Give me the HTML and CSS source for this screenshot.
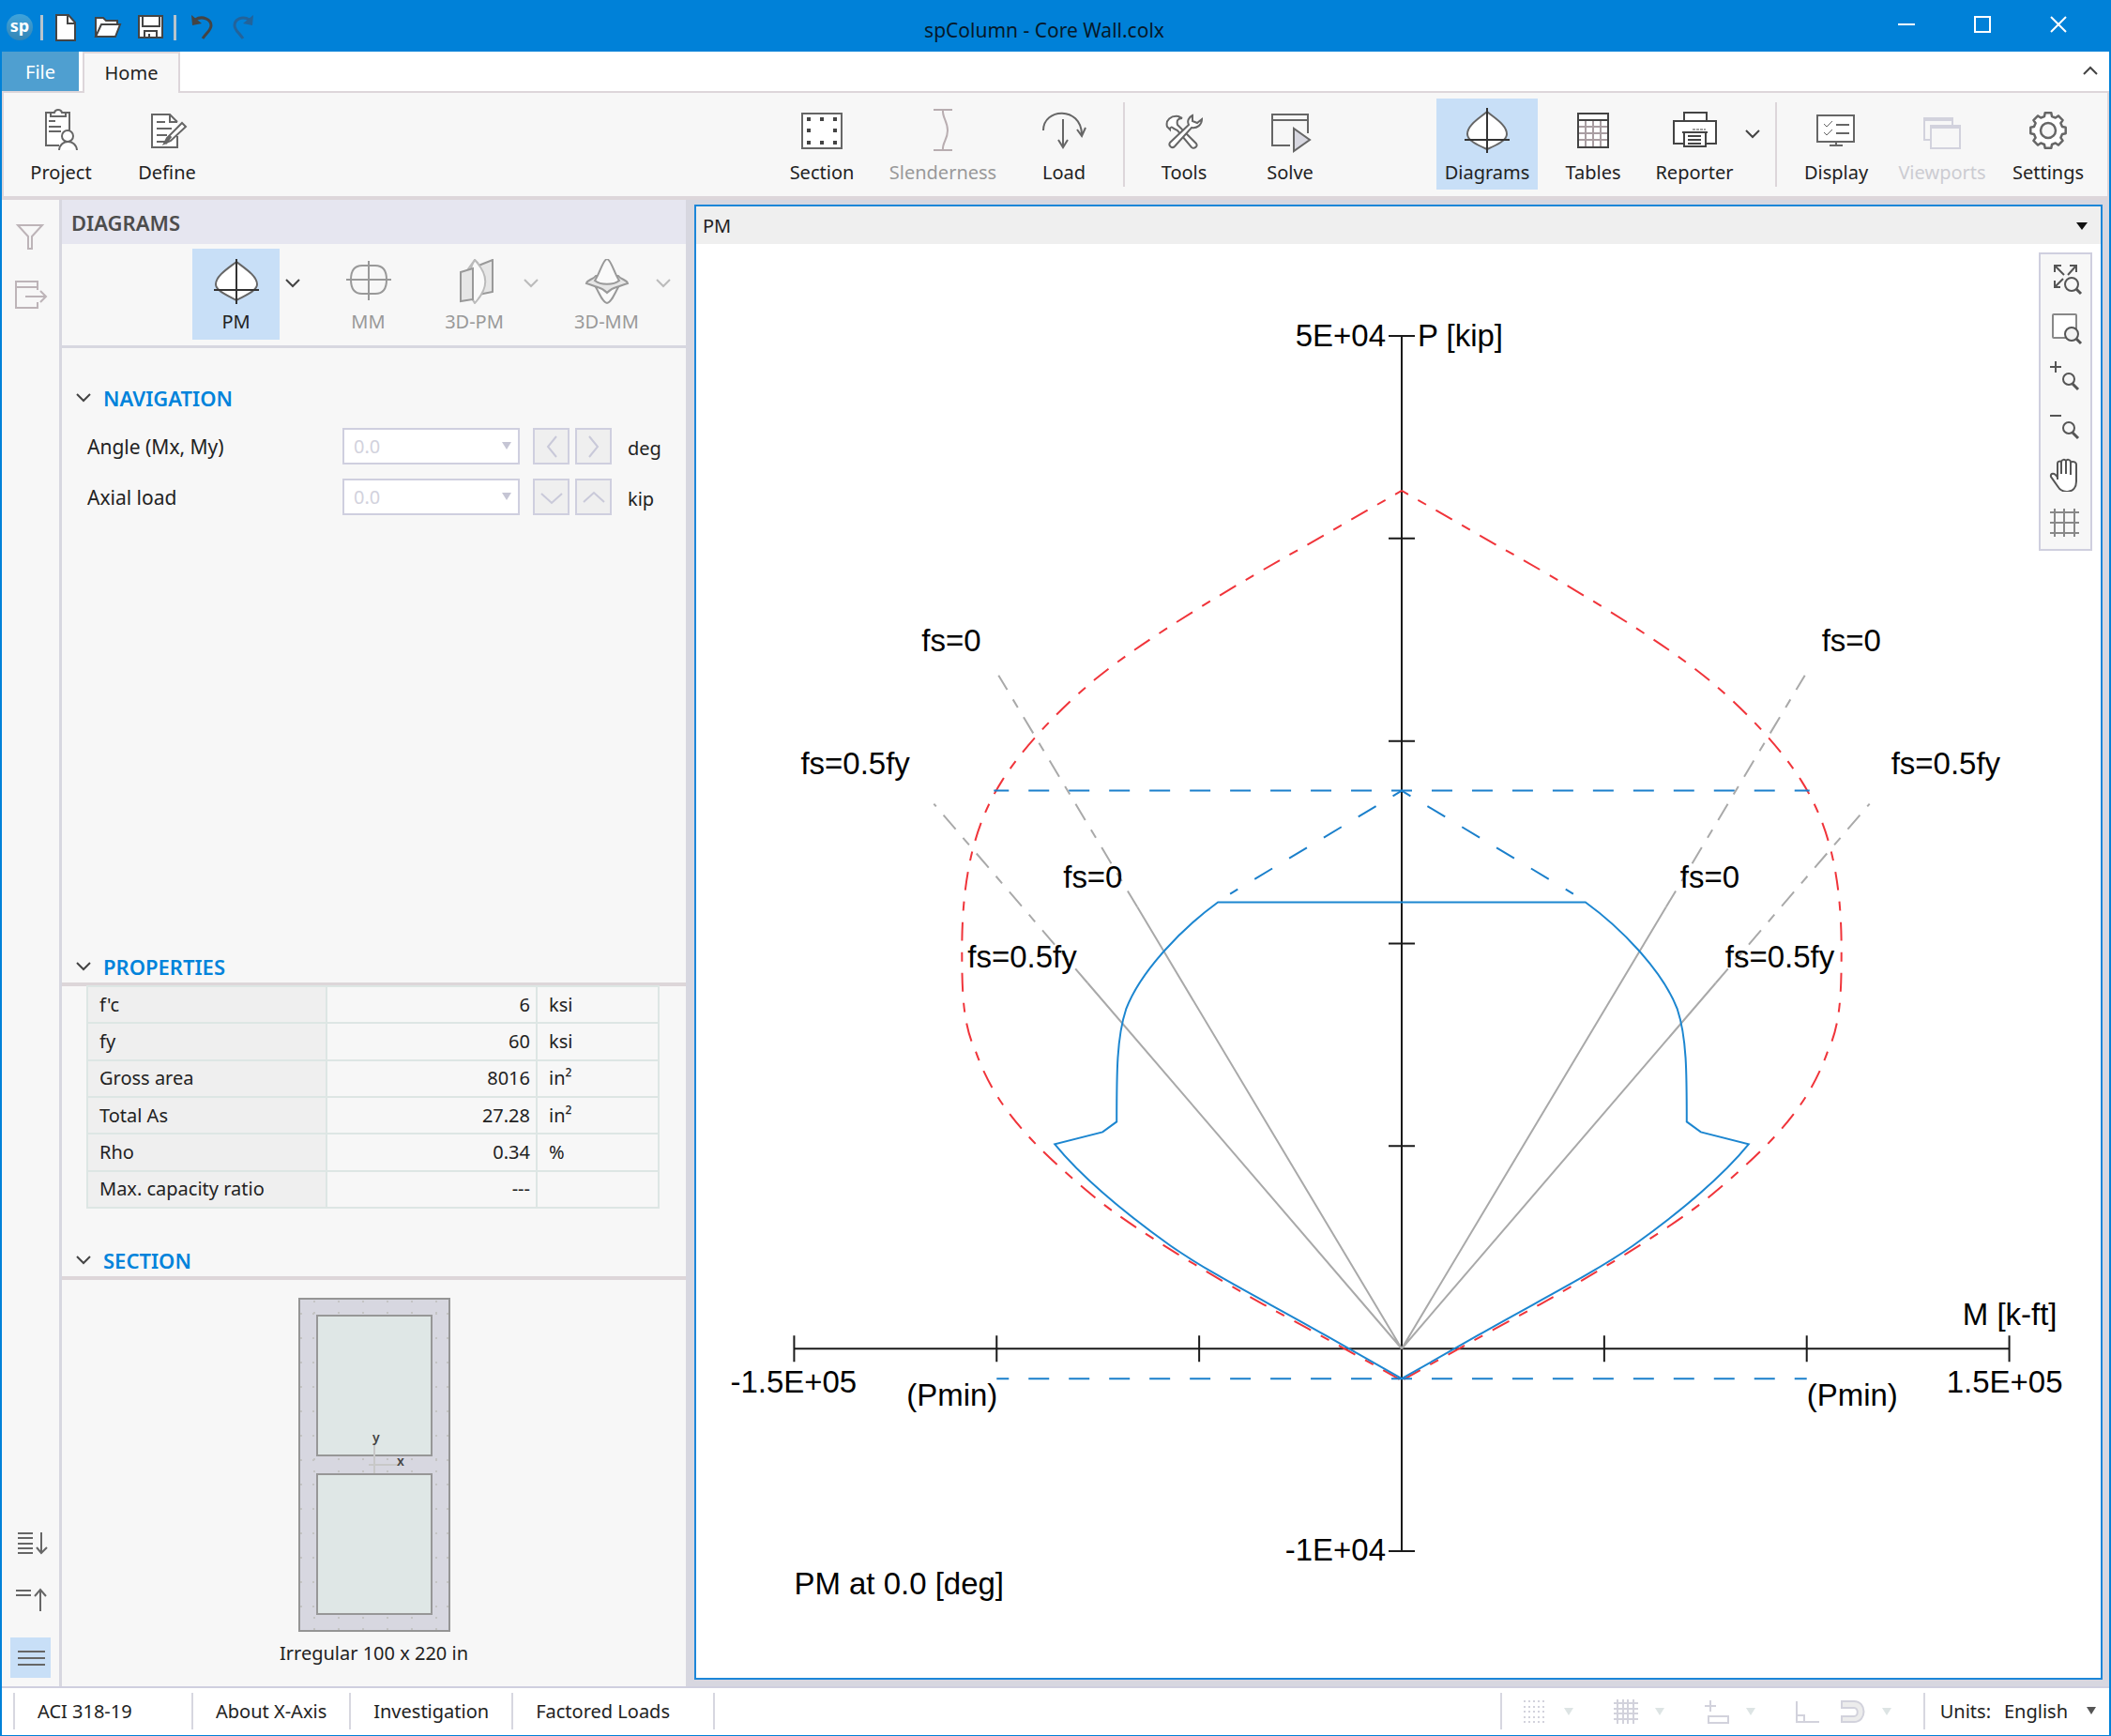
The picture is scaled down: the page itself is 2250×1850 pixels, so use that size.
FILE: index.html
```html
<!DOCTYPE html>
<html lang="en">
<head>
  <meta charset="UTF-8">
  <title>spColumn - Core Wall.colx</title>
  <link rel="stylesheet" href="styles.css">
</head>
<body>

  <header class="titlebar">
    <div class="quick">
      <svg class="logo" viewBox="0 0 28 28"><defs><linearGradient id="lg" x1="0" y1="0" x2="0" y2="1"><stop offset="0" stop-color="#3fa4dc"/><stop offset="1" stop-color="#3585b4"/></linearGradient></defs><circle cx="14" cy="14" r="14" fill="url(#lg)"/><text x="14" y="19" text-anchor="middle">sp</text></svg>
      <span class="quick-sep"></span>
      <button aria-label="New"><svg viewBox="0 0 32 32"><path d="M5 3h13l7 8v19H5z" fill="#fff" stroke="#444" stroke-width="2"/><path d="M17 3v9h8" fill="none" stroke="#444" stroke-width="2"/></svg></button>
      <button aria-label="Open"><svg viewBox="0 0 32 32"><path d="M2 26V6h8l3 3h12v5" fill="#fff" stroke="#444" stroke-width="2"/><path d="M2 26l6-13h20l-5 13z" fill="#fff" stroke="#444" stroke-width="2"/></svg></button>
      <button aria-label="Save"><svg viewBox="0 0 32 32"><path d="M3 4h25v23H3z" fill="#fff" stroke="#444" stroke-width="2"/><path d="M7 4v11h18V4M9 27v-7h13v7M14 27v-4" fill="none" stroke="#444" stroke-width="2"/></svg></button>
      <span class="quick-sep"></span>
      <button aria-label="Undo"><svg viewBox="0 0 32 32"><path d="M11 8c8-5 17 0 17 6 0 5-4 7-9 14" fill="none" stroke="#444" stroke-width="3"/><path d="M7 3l1 11 10-2z" fill="#444"/></svg></button>
      <button aria-label="Redo"><svg viewBox="0 0 32 32"><path d="M24 8C16 3 8 8 8 14c0 5 4 7 9 14" fill="none" stroke="#23639a" stroke-width="3"/><path d="M28 3l-1 11-10-2z" fill="#23639a"/></svg></button>
    </div>
    <div class="title">spColumn - Core Wall.colx</div>
    <div class="window-controls">
      <button aria-label="Minimize"><svg viewBox="0 0 20 20"><path d="M1 10h18"/></svg></button>
      <button aria-label="Maximize"><svg viewBox="0 0 20 20"><path d="M2 2h16v16H2z"/></svg></button>
      <button aria-label="Close"><svg viewBox="0 0 20 20"><path d="M2 2l16 16M18 2L2 18"/></svg></button>
    </div>
  </header>

  <nav class="tabs">
    <button class="tab-file">File</button>
    <button class="tab-home">Home</button>
    <button class="collapse" aria-label="Collapse ribbon"><svg class="chev" viewBox="0 0 16 10"><path d="M1 9l7-7 7 7"/></svg></button>
  </nav>

  <div class="ribbon">
    <div class="group">
      <button class="tool"><svg viewBox="0 0 48 48"><path d="M33 26V5H8v35h14" fill="#fff"/><path d="M13 9V5h4c1-4 7-4 8 0h4v4z" fill="#fff"/><path d="M11 14h7M11 20h13M11 25h13" /><circle cx="31" cy="30" r="6" fill="#fff"/><path d="M22 45c1-12 18-12 19 0" fill="#fff"/></svg>Project</button>
      <button class="tool"><svg viewBox="0 0 48 48"><path d="M35 30v12H8V7h19l8 8" fill="#fff"/><path d="M27 7v8h8M13 15h9M13 22h16M13 29h11M13 36h12"/><path d="M40 16l4 4-16 15-7 3 3-6z" fill="#fff"/><path d="M28 30l-6 8" stroke-width="3"/></svg>Define</button>
    </div>

    <div class="group group-mid">
      <button class="tool"><svg viewBox="0 0 48 48"><path d="M3 6h42v37H3z" fill="#fff"/><path d="M8 12h4m10 0h4m10 0h4M8 24h4m24 0h4M8 37h4m10 0h4m10 0h4" stroke="#444" stroke-width="4"/></svg>Section</button>
      <button class="tool broad off"><svg viewBox="0 0 48 48"><path d="M14 2h20M14 45h20M24 2c-1 8 5 12 5 22s-6 13-5 21" stroke="#b8adb0"/></svg>Slenderness</button>
      <button class="tool"><svg viewBox="0 0 48 48"><path d="M2 24C2 0 42-2 43 28M23 12v29M18 34l5 8 5-8M38 23l5 7 4-9"/></svg>Load</button>
      <span class="sep"></span>
      <button class="tool"><svg viewBox="0 0 48 48"><path d="M6 20c-2-7 4-12 12-11l4 2c-5 0-6 3-5 7l3 3 17 17c2 3-2 6-5 4L17 24l-4-2c-2-2-4-2-4 1z" fill="#fff"/><path d="M33 8c-4 2-6 6-4 10L9 37c-2 3 2 7 5 4l18-20c6 1 11-3 11-9l-5 4-5-2z" fill="#fff"/></svg>Tools</button>
      <button class="tool"><svg viewBox="0 0 48 48"><path d="M24 40H5V7h38v20M5 13h38" /><path d="M28 22v24l17-12z" fill="#d7d7e0"/></svg>Solve</button>
    </div>

    <div class="group group-end">
      <button class="tool active"><svg viewBox="0 0 48 48"><path d="M24 4C16 11 3 18 3 28c0 7 12 12 21 16 9-4 21-9 21-16C45 18 32 11 24 4z" fill="#fff"/><path d="M24 0v48M0 34h48" stroke="#333"/></svg>Diagrams</button>
      <button class="tool"><svg viewBox="0 0 48 48"><path d="M8 6h32v36H8z" fill="#fff"/><path d="M9 20h30M9 27h30M9 34h30M16 14v28M24 14v28M32 14v28" stroke="#a99ea2"/><path d="M8 6h32v36H8zM8 13h32" stroke="#444"/></svg>Tables</button>
      <button class="tool narrow"><svg viewBox="0 0 48 48"><g stroke="#444"><path d="M13 14V5h24v9" fill="#fff"/><path d="M12 38H2V14h45v24H36" fill="#fff"/><path d="M11 26h27"/><path d="M13 26v15h23V26z" fill="#fff"/><path d="M17 30h14M17 34h14M17 38h14"/><path d="M22 23h14" stroke-width="1" stroke-dasharray="3 1"/></g></svg>Reporter</button>
      <button class="drop" aria-label="Reporter options"><svg class="chev" viewBox="0 0 16 10"><path d="M1 1l7 7 7-7"/></svg></button>
      <span class="sep"></span>
      <button class="tool"><svg viewBox="0 0 48 48"><path d="M4 8h39v28H4zM24 36v4M17 40h14" fill="#fff"/><path d="M24 18h14M24 27h14"/><path d="M11 17l3 3 6-6M11 26l3 3 6-6" stroke-width="1"/></svg>Display</button>
      <button class="tool faint"><svg viewBox="0 0 48 48"><path d="M12 34H5V11h30v8M5 13h30M12 19h31v24H12zM12 21h31" stroke="#d2d2dd"/></svg>Viewports</button>
      <button class="tool"><svg viewBox="0 0 48 48"><path d="M20.7 5.3L27.3 5.3 28 9 31.8 10.6 34.9 8.4 39.6 13.1 37.4 16.2 39 20 42.7 20.7 42.7 27.3 39 28 37.4 31.8 39.6 34.9 34.9 39.6 31.8 37.4 28 39 27.3 42.7 20.7 42.7 20 39 16.2 37.4 13.1 39.6 8.4 34.9 10.6 31.8 9 28 5.3 27.3 5.3 20.7 9 20 10.6 16.2 8.4 13.1 13.1 8.4 16.2 10.6 20 9Z" fill="#fff" stroke-width="2.5" stroke-linejoin="round"/><circle cx="24" cy="24" r="8" fill="#f7f7f7" stroke-width="2.5"/></svg>Settings</button>
    </div>
  </div>

  <main class="main">
    <aside class="strip">
      <button aria-label="Filter"><svg viewBox="0 0 36 36"><path d="M4 5h26L19 17v13h-4V17z" stroke="#bdb4b8"/></svg></button>
      <button aria-label="Export"><svg viewBox="0 0 36 36"><path d="M25 13V4H2v28h23v-6M2 10h23M12 20h22M28 14l6 6-6 6" stroke="#bdb4b8"/></svg></button>
      <span class="spacer"></span>
      <button aria-label="Expand all"><svg viewBox="0 0 36 36"><path d="M4 7h16M4 12h16M4 18h16M4 23h16M4 28h16M29 6v22M24 22l5 6 6-6"/></svg></button>
      <button aria-label="Collapse all"><svg viewBox="0 0 36 36"><path d="M2 7h16M2 12h16M28 29V7M22 13l6-7 6 7"/></svg></button>
      <button class="active" aria-label="Menu"><svg viewBox="0 0 36 36"><path d="M4 11h29M4 18h29M4 25h29"/></svg></button>
    </aside>

    <section class="panel">
      <h2>DIAGRAMS</h2>
      <div class="panel-tools">
        <button class="ptool active"><svg viewBox="0 0 48 48"><path d="M24 3C15 10 2 18 2 27c0 7 13 12 22 17 9-5 22-10 22-17C46 18 33 10 24 3z" fill="#fff" stroke="#666"/><path d="M24 0v48M0 33h48" stroke="#333"/></svg>PM</button>
        <button class="drop" aria-label="PM options"><svg class="chev" viewBox="0 0 16 10"><path d="M1 1l7 7 7-7"/></svg></button>
        <button class="ptool off"><svg viewBox="0 0 48 48"><path d="M5 22c0-8 3-15 12-15h14c9 0 12 7 12 15s-3 15-12 15H17C8 37 5 30 5 22zM24 2v42M0 22h48"/></svg>MM</button>
        <button class="ptool off"><svg viewBox="0 0 48 48"><path d="M24 46l-8-9V12l8-11 4 4" stroke="#bbb"/><path d="M28 7l15-6v34l-15 3z" fill="#e6e6e6"/><path d="M24 1c15 16 15 30 0 46-8-12-8-34 0-46z" fill="#fafafa" stroke="#bbb"/><path d="M9 14l13-4v33L9 45z" fill="#e6e6e6"/></svg>3D-PM</button>
        <button class="drop" aria-label="3D-PM options"><svg class="chev off" viewBox="0 0 16 10"><path d="M1 1l7 7 7-7"/></svg></button>
        <button class="ptool off"><svg viewBox="0 0 48 48"><path d="M12 30c4 7 8 17 12 17s8-10 12-17z" fill="#fafafa"/><path d="M12 18c-3 4-9 4-10 8 4 1 8 3 12 4 4 1 7 3 10 6 3-3 6-5 10-6 4-1 8-3 12-4-1-4-7-4-10-8z" fill="#e6e6e6"/><path d="M24 0c4 0 8 16 13 23-6 5-20 5-26 0C16 16 20 0 24 0z" fill="#fafafa"/></svg>3D-MM</button>
        <button class="drop" aria-label="3D-MM options"><svg class="chev off" viewBox="0 0 16 10"><path d="M1 1l7 7 7-7"/></svg></button>
      </div>

      <div class="block block-nav">
        <h3><svg class="chev" viewBox="0 0 16 10"><path d="M1 1l7 7 7-7"/></svg>NAVIGATION</h3>
        <div class="field">
          <label for="angle">Angle (Mx, My)</label>
          <span class="select"><select id="angle" disabled><option>0.0</option></select></span>
          <button class="step" disabled aria-label="Previous angle"><svg viewBox="0 0 26 26"><path d="M18 2L9 13l9 11"/></svg></button>
          <button class="step" disabled aria-label="Next angle"><svg viewBox="0 0 26 26"><path d="M8 2l9 11-9 11"/></svg></button>
          <span class="unit">deg</span>
        </div>
        <div class="field">
          <label for="axial">Axial load</label>
          <span class="select"><select id="axial" disabled><option>0.0</option></select></span>
          <button class="step" disabled aria-label="Lower load"><svg viewBox="0 0 26 26"><path d="M2 9l11 10L24 9"/></svg></button>
          <button class="step" disabled aria-label="Raise load"><svg viewBox="0 0 26 26"><path d="M2 18L13 8l11 10"/></svg></button>
          <span class="unit">kip</span>
        </div>
      </div>

      <div class="block block-props">
        <h3 class="ruled"><svg class="chev" viewBox="0 0 16 10"><path d="M1 1l7 7 7-7"/></svg>PROPERTIES</h3>
        <table>
          <tr><th>f'c</th><td class="num">6</td><td>ksi</td></tr>
          <tr><th>fy</th><td class="num">60</td><td>ksi</td></tr>
          <tr><th>Gross area</th><td class="num">8016</td><td>in²</td></tr>
          <tr><th>Total As</th><td class="num">27.28</td><td>in²</td></tr>
          <tr><th>Rho</th><td class="num">0.34</td><td>%</td></tr>
          <tr><th>Max. capacity ratio</th><td class="num">---</td><td></td></tr>
        </table>
      </div>

      <div class="block">
        <h3 class="ruled"><svg class="chev" viewBox="0 0 16 10"><path d="M1 1l7 7 7-7"/></svg>SECTION</h3>
        <figure>
          <svg class="section-view" viewBox="0 0 162 356">
            <rect x="1" y="1" width="160" height="354" fill="#d7d7e0" stroke="#959595" stroke-width="2"/>
            <!-- rebar along the wall faces -->
            <g fill="none" stroke="#c4c4c4" stroke-width="2" stroke-dasharray="2 24">
              <path d="M3 16v330M16 16v330M147 16v330M159 16v330"/>
              <path d="M16 4h140M16 16h140M16 172h140M16 185h140M16 341h140M16 353h140"/>
            </g>
            <rect x="20" y="19" width="122" height="149" fill="#dfe7e6" stroke="#979797" stroke-width="2"/>
            <rect x="20" y="188" width="122" height="149" fill="#dfe7e6" stroke="#979797" stroke-width="2"/>
            <path d="M81 155v32M75 178h34" stroke="#c8c8c8" stroke-width="2"/>
            <text x="79" y="154">y</text>
            <text x="105" y="179">x</text>
          </svg>
          <figcaption>Irregular 100 x 220 in</figcaption>
        </figure>
      </div>
    </section>

    <section class="viewport">
      <div class="viewport-head">PM<button class="tri" aria-label="Viewport menu"></button></div>
      <div class="plot">
        <svg class="chart" viewBox="742 260 1497 1529">
          <g class="axis">
            <path d="M1494 358v1296M846 1438h1296"/>
            <path d="M1480 358h28M1480 574h28M1480 790h28M1480 1006h28M1480 1222h28M1480 1654h28"/>
            <path d="M846 1424v28M1062 1424v28M1278 1424v28M1710 1424v28M1926 1424v28M2142 1424v28"/>
          </g>
          <g id="half">
            <path class="nominal" d="M1494 523L1393 581C1330 616 1220 680 1165 726C1128 757 1090 797 1068 832C1040 876 1025 930 1025 1012C1025 1060 1026 1092 1040 1122C1062 1184 1105 1225 1167 1277C1210 1312 1300 1365 1347 1391C1397 1418 1455 1450 1494 1472"/>
            <path class="limit" d="M1494 843H1059"/>
            <path class="limit" d="M1494 843L1311 953"/>
            <path class="limit" d="M1494 1470H1062"/>
            <path class="ray" d="M1494 1438L1212 967M1494 1438L1159 1048"/>
            <path class="ray dashed" d="M1212 967L1064 720M1159 1048L995 857"/>
            <path class="design" d="M1494 962H1298C1262 988 1216 1034 1200 1076C1190 1106 1190 1144 1190 1196L1175 1207 1124 1220C1155 1258 1208 1300 1247 1328C1290 1358 1350 1388 1413 1424L1494 1470"/>
          </g>
          <use href="#half" transform="translate(2988) scale(-1 1)"/>
          <text x="1477" y="369" class="end">5E+04</text>
          <text x="1511" y="369">P [kip]</text>
          <text x="982" y="694">fs=0</text>
          <text x="1942" y="694">fs=0</text>
          <text x="853" y="825">fs=0.5fy</text>
          <text x="2016" y="825">fs=0.5fy</text>
          <text x="1133" y="946">fs=0</text>
          <text x="1791" y="946">fs=0</text>
          <text x="1031" y="1032">fs=0.5fy</text>
          <text x="1839" y="1032">fs=0.5fy</text>
          <text x="2193" y="1413" class="end">M [k-ft]</text>
          <text x="778" y="1485">-1.5E+05</text>
          <text x="2199" y="1485" class="end">1.5E+05</text>
          <text x="1063" y="1499" class="end">(Pmin)</text>
          <text x="1926" y="1499">(Pmin)</text>
          <text x="1477" y="1664" class="end">-1E+04</text>
          <text x="846" y="1700">PM at 0.0 [deg]</text>
        </svg>
        <div class="zoombar">
          <button aria-label="Zoom extents"><svg viewBox="0 0 36 36"><path d="M16 13L6 3M6 10V3h7M20 13l9-10M22 3h7v7M15 17l-9 9M6 19v7h6"/><circle cx="24" cy="23" r="7"/><path d="M29 28l5 5" stroke-width="3"/></svg></button>
          <button aria-label="Zoom window"><svg viewBox="0 0 36 36"><rect x="4" y="3" width="25" height="25" rx="1" fill="#fff" stroke="#888"/><circle cx="24" cy="24" r="7" fill="#f2f2f2"/><path d="M29 29l5 5" stroke-width="3"/></svg></button>
          <button aria-label="Zoom in"><svg viewBox="0 0 36 36"><path d="M1 7h12M7 1v12"/><circle cx="21" cy="20" r="6"/><path d="M25 25l6 6" stroke-width="3"/></svg></button>
          <button aria-label="Zoom out"><svg viewBox="0 0 36 36"><path d="M1 7h12"/><circle cx="21" cy="20" r="6"/><path d="M25 25l6 6" stroke-width="3"/></svg></button>
          <button aria-label="Pan"><svg viewBox="0 0 36 36"><path d="M9 23V6c0-3 4-3 4-1 0-4 5-4 5-1 0-3 5-3 5 1 1-2 6-1 6 2v18c0 13-15 14-20 5L2 20c-1-4 4-5 7 1" fill="#fff"/><path d="M13 5v12M18 4v13M23 5v13"/></svg></button>
          <button aria-label="Grid"><svg viewBox="0 0 36 36"><path d="M1 6h31M1 17h31M1 28h31M6 2v30M16 2v30M27 2v30" stroke="#888"/></svg></button>
        </div>
      </div>
    </section>
  </main>

  <footer class="status">
    <span class="cell cell-first">ACI 318-19</span>
    <span class="cell">About X-Axis</span>
    <span class="cell">Investigation</span>
    <span class="cell cell-last">Factored Loads</span>
    <div class="status-tools">
      <button aria-label="Snap grid"><svg viewBox="0 0 26 26"><path d="M1 2h24M1 8h24M1 13h24M1 19h24M1 24h24" stroke-dasharray="2 3"/></svg></button>
      <button class="tri pale" aria-label="Snap grid options"></button>
      <button aria-label="Grid lines"><svg viewBox="0 0 26 26"><path d="M0 4h26M0 10h26M0 15h26M0 21h26M4 0v26M10 0v26M15 0v26M21 0v26"/></svg></button>
      <button class="tri pale" aria-label="Grid options"></button>
      <button aria-label="Coordinates"><svg viewBox="0 0 26 26"><path d="M0 7h12M6 1v12M4 18h21v7H4z"/></svg></button>
      <button class="tri pale" aria-label="Coordinate options"></button>
      <button aria-label="Ortho"><svg viewBox="0 0 26 26"><path d="M1 2v22h24M1 17h8v7"/></svg></button>
      <button class="magnet" aria-label="Object snap"><svg viewBox="0 0 26 26"><path d="M1 2h13c14 0 14 22 0 22H1v-6h13c5 0 5-9 0-9H1z" fill="#ececec"/></svg></button>
      <button class="tri pale" aria-label="Object snap options"></button>
    </div>
    <div class="units">
      <label for="units">Units:</label>
      <span class="select"><select id="units"><option>English</option></select></span>
    </div>
  </footer>

</body>
</html>
```
FILE: styles.css
```css
* {
  box-sizing: border-box;
}

body {
  margin: 0;
  height: 100vh;
  display: flex;
  flex-direction: column;
  font-family: "Noto Sans", "Open Sans", sans-serif;
  font-size: 20px;
  line-height: 28px;
  color: #222;
  background: #f7f7f7;
  border: solid #0081d8;
  border-width: 0 2px 1px;
}

button {
  font: inherit;
  color: inherit;
  background: none;
  border: none;
  padding: 0;
  display: flex;
  align-items: center;
  justify-content: center;
}

svg {
  display: block;
  fill: none;
  stroke: #666;
  stroke-width: 2;
}

.chev {
  width: 16px;
  height: 10px;
  stroke: #444;
}

.chev.off {
  stroke: #bbb;
}

.active {
  background: #c8dff7;
}

/* title bar */

.titlebar {
  display: grid;
  grid-template-columns: 1fr auto 1fr;
  align-items: center;
  height: 55px;
  padding: 0 29px 0 5px;
  background: #0081d8;
  color: #06192a;
}

.quick,
.window-controls {
  display: flex;
  align-items: center;
}

.quick {
  padding-top: 3px;
}

.logo {
  width: 28px;
  height: 28px;
  margin-right: 6px;
  stroke: none;
}

.logo text {
  fill: #fff;
  font-size: 18px;
  font-weight: bold;
}

.quick-sep {
  width: 3px;
  height: 27px;
  margin: 0 2px;
  background: #b8c4cc;
}

.quick button {
  width: 45px;
  height: 40px;
}

.quick button svg {
  width: 32px;
  height: 32px;
  stroke: none;
}

.title {
  padding-top: 8px;
  font-size: 21px;
}

.window-controls {
  justify-content: flex-end;
  gap: 31px;
  padding-bottom: 3px;
}

.window-controls button {
  width: 50px;
  height: 50px;
}

.window-controls svg {
  width: 20px;
  height: 20px;
  stroke: #fff;
}

/* ribbon */

.tabs {
  display: flex;
  height: 42px;
  background: #fff;
}

.tab-file {
  width: 82px;
  margin-right: 4px;
  padding-top: 2px;
  color: #fff;
  background: #4f9fd0;
}

.tab-home {
  width: 104px;
  height: 44px;
  z-index: 1;
  background: #f7f7f7;
  border: 2px solid #ddd6da;
  border-bottom: none;
}

.collapse {
  margin-left: auto;
  padding: 0 12px 2px;
}

.ribbon {
  display: flex;
  padding: 6px 9px 7px 7px;
  border: 2px solid #ddd6da;
  border-bottom-width: 4px;
}

.group {
  display: flex;
  gap: 5px;
}

.group-mid {
  margin-left: auto;
}

.group-end {
  margin-left: 102px;
}

.tool {
  flex-direction: column;
  justify-content: flex-start;
  width: 108px;
  height: 97px;
  padding-top: 10px;
}

.tool.narrow {
  width: 98px;
}

.tool.broad {
  width: 140px;
}

.tool svg {
  width: 48px;
  height: 48px;
  margin-bottom: 7px;
}

.off {
  color: #999;
}

.faint {
  color: #ccccd2;
}

.drop {
  width: 28px;
}

.ribbon .drop {
  width: 23px;
  padding: 0 7px 22px 0;
}

.sep {
  width: 2px;
  height: 90px;
  margin: 4px 4px 0;
  background: #ddd6da;
}

/* left side */

.main {
  flex: 1;
  min-height: 0;
  display: flex;
  background: #d7d7e0;
}

.strip {
  display: flex;
  flex-direction: column;
  align-items: center;
  width: 64px;
  padding: 18px 0 9px;
  background: #f7f7f7;
  border-right: 3px solid #d7d7e0;
}

.strip button {
  width: 43px;
  height: 43px;
  margin-bottom: 18px;
}

.strip button:last-child {
  margin-bottom: 0;
}

.strip svg {
  width: 36px;
  height: 36px;
}

.spacer {
  flex: 1;
}

.panel {
  display: flex;
  flex-direction: column;
  width: 665px;
  background: #f7f7f7;
}

.panel h2 {
  margin: 0;
  padding: 10px 10px 9px;
  font-size: 22px;
  font-weight: 600;
  color: #4d4d4d;
  background: #e6e6f0;
}

.panel-tools {
  display: flex;
  align-items: flex-start;
  padding: 5px 8px 6px 139px;
  border-bottom: 3px solid #d7d7e0;
}

.ptool {
  flex-direction: column;
  justify-content: flex-start;
  width: 93px;
  height: 97px;
  padding-top: 11px;
}

.ptool.off {
  margin-left: 20px;
}

.ptool svg {
  width: 48px;
  height: 48px;
  margin-bottom: 5px;
}

.ptool.off svg {
  stroke: #999;
}

.panel-tools .drop {
  height: 74px;
}

.block h3 {
  display: flex;
  align-items: center;
  gap: 13px;
  height: 38px;
  margin: 0;
  padding-left: 15px;
  font-size: 22px;
  font-weight: 600;
  color: #0083db;
  border-bottom: 4px solid transparent;
}

.block h3.ruled {
  border-color: #ddd6d9;
}

.block-nav {
  flex: 1;
  padding-top: 36px;
}

.field {
  display: flex;
  align-items: center;
  gap: 6px;
  margin: 11px 26px 15px 27px;
}

.field + .field {
  margin-top: 0;
}

.field label {
  flex: 1;
  font-size: 21px;
}

.select {
  position: relative;
  display: flex;
}

.select::after {
  content: "";
  position: absolute;
  right: 9px;
  top: 15px;
  border: solid transparent;
  border-width: 8px 5px 0;
  border-top-color: #c5c5d4;
}

.select select {
  appearance: none;
  font: inherit;
  color: #222;
  background: none;
  border: none;
}

.field .select {
  margin-right: 8px;
}

.field select {
  width: 189px;
  height: 39px;
  padding: 0 10px;
  color: #d2d2dd;
  opacity: 1;
  background: #fff;
  border: 2px solid #cfcfdf;
}

.step {
  width: 39px;
  height: 39px;
  background: #efefef;
  border: 2px solid #cfcfdf;
}

.step svg {
  width: 26px;
  height: 26px;
  stroke: #c9c9d9;
}

.unit {
  width: 36px;
  margin-left: 11px;
  padding-top: 4px;
}

.block-props {
  margin-bottom: 38px;
}

table {
  width: 611px;
  height: 238px;
  margin: -1px 0 0 26px;
  border-collapse: collapse;
  table-layout: fixed;
}

th,
td {
  padding: 0 12px;
  text-align: left;
  font-weight: normal;
  border: 2px solid #dde6e4;
}

th {
  width: 255px;
  background: #efefef;
}

.num {
  width: 224px;
  padding-right: 6px;
  text-align: right;
}

figure {
  display: flex;
  flex-direction: column;
  align-items: center;
  margin: 19px 0 21px;
}

.section-view {
  width: 162px;
  height: 356px;
  margin-bottom: 9px;
}

.section-view text {
  font-size: 14px;
  font-weight: 600;
  fill: #444;
  stroke: none;
}

/* diagram viewport */

.viewport {
  flex: 1;
  display: flex;
  flex-direction: column;
  margin: 5px 7px 7px 9px;
  background: #fff;
  border: 2px solid #1c86d8;
}

.viewport-head {
  display: flex;
  justify-content: space-between;
  align-items: center;
  height: 40px;
  padding: 2px 14px 0 7px;
  background: #efefef;
}

.tri {
  width: 0;
  height: 0;
  border: solid transparent;
  border-width: 8px 6px 0;
  border-top-color: #111;
}

.tri.pale {
  border-top-color: #dde4e4;
}

.plot {
  position: relative;
  flex: 1;
  min-height: 0;
}

.chart {
  width: 100%;
  height: 100%;
}

.chart text {
  font-family: "Liberation Sans", Arial, sans-serif;
  font-size: 33px;
  fill: #000;
  stroke: none;
}

.chart .end {
  text-anchor: end;
}

.axis {
  stroke: #1a1a1a;
}

.nominal {
  stroke: #f0343a;
  stroke-dasharray: 20 12 10 12;
  stroke-dashoffset: 12;
}

.limit {
  stroke: #1a7fcb;
  stroke-dasharray: 22 21;
  stroke-dashoffset: 11;
}

.ray {
  stroke: #a9a9a9;
}

.ray.dashed {
  stroke-dasharray: 20 12 10 12;
}

.design {
  stroke: #1c86d0;
}

.zoombar {
  position: absolute;
  top: 9px;
  right: 9px;
  width: 57px;
  padding: 1px 0;
  background: #f7f7f7;
  border: 2px solid #cfcfdf;
}

.zoombar button {
  width: 53px;
  height: 52px;
}

.zoombar svg {
  width: 36px;
  height: 36px;
  stroke: #555;
}

/* status bar */

.status {
  display: flex;
  align-items: center;
  height: 52px;
  padding: 0 14px 1px 12px;
  background: #fff;
  border-top: 2px solid #cfcfdf;
}

.cell {
  height: 39px;
  padding: 6px 24px 0;
  border-left: 2px solid #d7d7e0;
}

.cell-first {
  width: 190px;
}

.cell-last {
  width: 217px;
  border-right: 2px solid #d7d7e0;
}

.status-tools {
  display: flex;
  align-items: center;
  gap: 18px;
  height: 39px;
  margin-left: auto;
  padding: 0 34px 0 22px;
  border: solid #d7d7e0;
  border-width: 0 2px;
}

.status-tools svg {
  width: 26px;
  height: 26px;
  stroke: #d2d2dc;
}

.status-tools .tri {
  border-width: 8px 5px 0;
}

.status-tools .tri + button {
  margin-left: 25px;
}

.magnet {
  margin-left: 4px;
}

.units {
  display: flex;
  gap: 14px;
  padding-left: 16px;
}

.units select {
  padding: 0 29px 0 0;
}

.units .select::after {
  right: 0;
  top: 9px;
  border-top-color: #555;
}
```
